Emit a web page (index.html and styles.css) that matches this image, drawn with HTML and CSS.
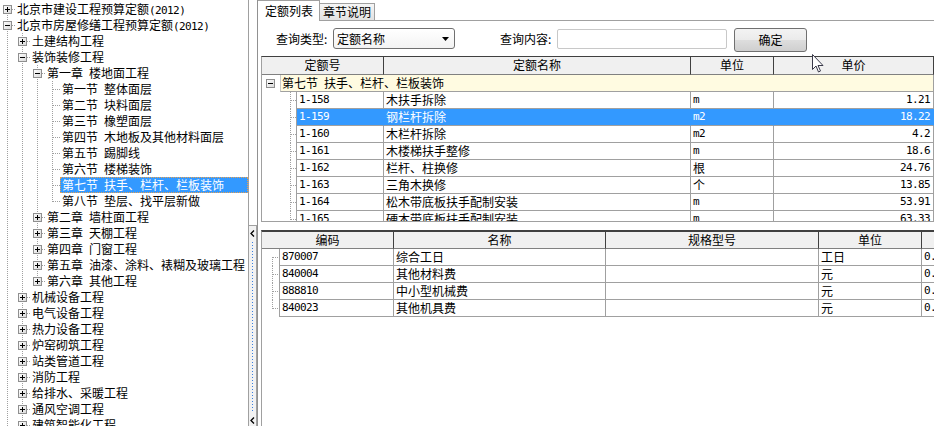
FILE: index.html
```html
<!DOCTYPE html>
<html lang="zh-CN">
<head>
<meta charset="utf-8">
<title>定额</title>
<link rel="stylesheet" href="styles.css">
</head>
<body>
<svg class="defs" width="0" height="0" aria-hidden="true">
  <defs>
    <linearGradient id="bxg" x1="0" y1="0" x2="1" y2="1">
      <stop offset="0" stop-color="#ffffff"/>
      <stop offset="1" stop-color="#d8d8d8"/>
    </linearGradient>
    <symbol id="plus" viewBox="0 0 9 9"><rect x=".5" y=".5" width="8" height="8" fill="url(#bxg)" stroke="#8f8f8f"/><path d="M2 4.5h5M4.5 2v5" stroke="#000"/></symbol>
    <symbol id="minus" viewBox="0 0 9 9"><rect x=".5" y=".5" width="8" height="8" fill="url(#bxg)" stroke="#8f8f8f"/><path d="M2 4.5h5" stroke="#000"/></symbol>
  </defs>
</svg>
<div class="app">
  <div class="tree">
    <div class="row"><span class="g s"><svg><use href="#plus"/></svg></span><span class="lb">北京市建设工程预算定额<span class="mn">(2012)</span></span></div>
    <div class="row"><span class="g t"><svg><use href="#minus"/></svg></span><span class="lb">北京市房屋修缮工程预算定额<span class="mn">(2012)</span></span></div>
    <div class="row"><span class="g v"></span><span class="g t"><svg><use href="#plus"/></svg></span><span class="lb">土建结构工程</span></div>
    <div class="row"><span class="g v"></span><span class="g t"><svg><use href="#minus"/></svg></span><span class="lb">装饰装修工程</span></div>
    <div class="row"><span class="g v"></span><span class="g v"></span><span class="g t"><svg><use href="#minus"/></svg></span><span class="lb">第一章&ensp;楼地面工程</span></div>
    <div class="row"><span class="g v"></span><span class="g v"></span><span class="g v"></span><span class="g t"></span><span class="lb">第一节&ensp;整体面层</span></div>
    <div class="row"><span class="g v"></span><span class="g v"></span><span class="g v"></span><span class="g t"></span><span class="lb">第二节&ensp;块料面层</span></div>
    <div class="row"><span class="g v"></span><span class="g v"></span><span class="g v"></span><span class="g t"></span><span class="lb">第三节&ensp;橡塑面层</span></div>
    <div class="row"><span class="g v"></span><span class="g v"></span><span class="g v"></span><span class="g t"></span><span class="lb">第四节&ensp;木地板及其他材料面层</span></div>
    <div class="row"><span class="g v"></span><span class="g v"></span><span class="g v"></span><span class="g t"></span><span class="lb">第五节&ensp;踢脚线</span></div>
    <div class="row"><span class="g v"></span><span class="g v"></span><span class="g v"></span><span class="g t"></span><span class="lb">第六节&ensp;楼梯装饰</span></div>
    <div class="row"><span class="g v"></span><span class="g v"></span><span class="g v"></span><span class="g t"></span><span class="lb sel">第七节&ensp;扶手、栏杆、栏板装饰</span></div>
    <div class="row"><span class="g v"></span><span class="g v"></span><span class="g v"></span><span class="g l"></span><span class="lb">第八节&ensp;垫层、找平层新做</span></div>
    <div class="row"><span class="g v"></span><span class="g v"></span><span class="g t"><svg><use href="#plus"/></svg></span><span class="lb">第二章&ensp;墙柱面工程</span></div>
    <div class="row"><span class="g v"></span><span class="g v"></span><span class="g t"><svg><use href="#plus"/></svg></span><span class="lb">第三章&ensp;天棚工程</span></div>
    <div class="row"><span class="g v"></span><span class="g v"></span><span class="g t"><svg><use href="#plus"/></svg></span><span class="lb">第四章&ensp;门窗工程</span></div>
    <div class="row"><span class="g v"></span><span class="g v"></span><span class="g t"><svg><use href="#plus"/></svg></span><span class="lb">第五章&ensp;油漆、涂料、裱糊及玻璃工程</span></div>
    <div class="row"><span class="g v"></span><span class="g v"></span><span class="g l"><svg><use href="#plus"/></svg></span><span class="lb">第六章&ensp;其他工程</span></div>
    <div class="row"><span class="g v"></span><span class="g t"><svg><use href="#plus"/></svg></span><span class="lb">机械设备工程</span></div>
    <div class="row"><span class="g v"></span><span class="g t"><svg><use href="#plus"/></svg></span><span class="lb">电气设备工程</span></div>
    <div class="row"><span class="g v"></span><span class="g t"><svg><use href="#plus"/></svg></span><span class="lb">热力设备工程</span></div>
    <div class="row"><span class="g v"></span><span class="g t"><svg><use href="#plus"/></svg></span><span class="lb">炉窑砌筑工程</span></div>
    <div class="row"><span class="g v"></span><span class="g t"><svg><use href="#plus"/></svg></span><span class="lb">站类管道工程</span></div>
    <div class="row"><span class="g v"></span><span class="g t"><svg><use href="#plus"/></svg></span><span class="lb">消防工程</span></div>
    <div class="row"><span class="g v"></span><span class="g t"><svg><use href="#plus"/></svg></span><span class="lb">给排水、采暖工程</span></div>
    <div class="row"><span class="g v"></span><span class="g t"><svg><use href="#plus"/></svg></span><span class="lb">通风空调工程</span></div>
    <div class="row"><span class="g v"></span><span class="g t"><svg><use href="#plus"/></svg></span><span class="lb">建筑智能化工程</span></div>
  </div>

  <div class="splitter">
    <div class="split-top"></div>
    <div class="split-btn">
      <svg class="chev" width="5" height="7" viewBox="0 0 5 7"><path d="M4 .5 1 3.5 4 6.5" fill="none" stroke="#000" stroke-width="1.3"/></svg>
      <div class="dots"></div>
      <svg class="chev" width="5" height="7" viewBox="0 0 5 7"><path d="M4 .5 1 3.5 4 6.5" fill="none" stroke="#000" stroke-width="1.3"/></svg>
    </div>
  </div>

  <div class="main">
    <div class="tabs">
      <div class="tab-on">定额列表</div>
      <div class="tab">章节说明</div>
      <div class="tab-fill"></div>
    </div>

    <div class="query">
      <span class="ql">查询类型:</span>
      <div class="sel-box"><span>定额名称</span><svg width="7" height="4" viewBox="0 0 7 4"><path d="M0 0h7L3.5 4z" fill="#000"/></svg></div>
      <span class="ql ql2">查询内容:</span>
      <div class="inp"></div>
      <div class="btn">确定</div>
    </div>

    <div class="grid1">
      <div class="tr th">
        <div class="u1">定额号</div><div class="u2">定额名称</div><div class="u3">单位</div><div class="u4">单价</div>
      </div>
      <div class="tr">
        <div class="gb"><svg width="9" height="9"><use href="#minus"/></svg></div>
        <div class="gc">第七节&ensp;扶手、栏杆、栏板装饰</div>
      </div>
      <div class="tr"><div class="ind ia"></div><div class="td u1d mn">1-158</div><div class="td u2">木扶手拆除</div><div class="td u3 mn">m</div><div class="td u4 r mn">1.21</div></div>
      <div class="tr sel"><div class="ind ia"></div><div class="td u1d mn">1-159</div><div class="td u2">钢栏杆拆除</div><div class="td u3 mn">m2</div><div class="td u4 r mn">18.22</div></div>
      <div class="tr"><div class="ind ia"></div><div class="td u1d mn">1-160</div><div class="td u2">木栏杆拆除</div><div class="td u3 mn">m2</div><div class="td u4 r mn">4.2</div></div>
      <div class="tr"><div class="ind ia"></div><div class="td u1d mn">1-161</div><div class="td u2">木楼梯扶手整修</div><div class="td u3 mn">m</div><div class="td u4 r mn">18.6</div></div>
      <div class="tr"><div class="ind ia"></div><div class="td u1d mn">1-162</div><div class="td u2">栏杆、柱换修</div><div class="td u3">根</div><div class="td u4 r mn">24.76</div></div>
      <div class="tr"><div class="ind ia"></div><div class="td u1d mn">1-163</div><div class="td u2">三角木换修</div><div class="td u3">个</div><div class="td u4 r mn">13.85</div></div>
      <div class="tr"><div class="ind ia"></div><div class="td u1d mn">1-164</div><div class="td u2">松木带底板扶手配制安装</div><div class="td u3 mn">m</div><div class="td u4 r mn">53.91</div></div>
      <div class="tr"><div class="ind ia"></div><div class="td u1d mn">1-165</div><div class="td u2">硬木带底板扶手配制安装</div><div class="td u3 mn">m</div><div class="td u4 r mn">63.33</div></div>
    </div>

    <div class="grid2">
      <div class="tr th th2">
        <div class="l1">编码</div><div class="l2">名称</div><div class="l3">规格型号</div><div class="l4">单位</div><div class="l5"></div>
      </div>
      <div class="tr"><div class="ind ib first"></div><div class="td l1d mn">870007</div><div class="td l2">综合工日</div><div class="td l3"></div><div class="td l4">工日</div><div class="td l5 mn">0.</div></div>
      <div class="tr"><div class="ind ib"></div><div class="td l1d mn">840004</div><div class="td l2">其他材料费</div><div class="td l3"></div><div class="td l4">元</div><div class="td l5 mn">0.</div></div>
      <div class="tr"><div class="ind ib"></div><div class="td l1d mn">888810</div><div class="td l2">中小型机械费</div><div class="td l3"></div><div class="td l4">元</div><div class="td l5 mn">0.</div></div>
      <div class="tr"><div class="ind ib last"></div><div class="td l1d mn">840023</div><div class="td l2">其他机具费</div><div class="td l3"></div><div class="td l4">元</div><div class="td l5 mn">0.</div></div>
    </div>
  </div>
</div>
<svg class="cursor" width="12" height="19" viewBox="0 0 12 19"><path d="M.5.5v15l3.5-3.5 2.5 6 2-1-2.5-5.5h5z" fill="#fff" stroke="#3a3a4a"/></svg>
</body>
</html>
```
FILE: styles.css
```css
* { box-sizing: border-box; }
html, body { margin: 0; padding: 0; }
body {
  width: 934px;
  height: 426px;
  overflow: hidden;
  background: #fff;
  color: #000;
  font-family: "Noto Sans CJK SC", "Noto Sans", sans-serif;
  font-size: 12px;
  --dv: repeating-linear-gradient(to bottom, #a0a0a0 0 1px, transparent 1px 2px);
  --dh: repeating-linear-gradient(to right, #a0a0a0 0 1px, transparent 1px 2px);
}
.defs { display: block; width: 0; height: 0; overflow: hidden; }
.mn { font-family: "DejaVu Sans Mono", "Liberation Mono", monospace; font-size: 11px; letter-spacing: -0.6px; }

.app { display: flex; height: 426px; }

/* tree */
.tree {
  width: 249px;
  flex: none;
  border-right: 1px solid #a0a0a0;
  padding-top: 1px;
  overflow: hidden;
}
.row { display: flex; height: 16px; }
.g { width: 15px; height: 16px; flex: none; padding: 4px 0 0 3px; }
.g svg { display: block; width: 9px; height: 9px; }
.g.v { background: var(--dv) 7px 0 / 1px 100% no-repeat; }
.g.t { background: var(--dh) 8px 8px / 7px 1px no-repeat, var(--dv) 7px 0 / 1px 100% no-repeat; }
.g.l { background: var(--dh) 8px 8px / 7px 1px no-repeat, var(--dv) 7px 0 / 1px 9px no-repeat; }
.g.s { background: var(--dh) 8px 8px / 7px 1px no-repeat, var(--dv) 7px 8px / 1px 8px no-repeat; }
.lb {
  flex: 1;
  padding-left: 2px;
  line-height: 16px;
  white-space: nowrap;
  overflow: hidden;
}
.lb.sel {
  background: #3399ff;
  color: #fff;
  outline: 1px dotted #e8a050;
  outline-offset: -1px;
}

/* splitter */
.splitter { width: 8px; flex: none; display: flex; flex-direction: column; }
.split-top { height: 225px; flex: none; }
.split-btn {
  flex: 1;
  background: #f2f2f2;
  border-top: 1px solid #a0a0a0;
  border-right: 1px solid #a0a0a0;
  display: flex;
  flex-direction: column;
  align-items: center;
  padding: 4px 0 2px;
}
.chev { display: block; flex: none; }
.dots {
  flex: 1;
  width: 1px;
  margin: 5px 0 5px;
  background: repeating-linear-gradient(to bottom, #3a80e0 0 1px, transparent 1px 3px);
}

/* main */
.main {
  flex: 1;
  min-width: 0;
  border-left: 1px solid #919191;
  display: flex;
  flex-direction: column;
  overflow: hidden;
}
.tabs { display: flex; height: 21px; flex: none; }
.tab-on {
  height: 21px;
  padding: 0 6px 0 7px;
  border-top: 1px solid #a0a0a0;
  border-right: 1px solid #a0a0a0;
  line-height: 19px;
  background: #fff;
}
.tab {
  height: 18px;
  margin-top: 3px;
  padding: 0 3px;
  border-top: 1px solid #a0a0a0;
  border-right: 1px solid #a0a0a0;
  border-bottom: 1px solid #a0a0a0;
  background: linear-gradient(#f6f6f6, #e2e2e2);
  line-height: 16px;
}
.tab-fill { flex: 1; border-bottom: 1px solid #a0a0a0; }

.query {
  display: flex;
  align-items: flex-start;
  height: 35px;
  flex: none;
  padding: 7px 0 0 18px;
}
.ql { width: 57px; flex: none; line-height: 21px; white-space: nowrap; }
.ql2 { margin-left: 45px; }
.sel-box {
  width: 122px;
  height: 21px;
  flex: none;
  border: 1px solid #707070;
  border-radius: 3px;
  background: linear-gradient(#ffffff, #f3f3f3);
  display: flex;
  align-items: center;
  padding: 0 5px 0 3px;
}
.sel-box span { flex: 1; line-height: 19px; }
.sel-box svg { display: block; }
.inp {
  width: 170px;
  height: 20px;
  flex: none;
  margin-top: 1px;
  border: 1px solid #c8c8c8;
  border-radius: 2px;
  background: #fff;
}
.btn {
  width: 73px;
  height: 24px;
  flex: none;
  margin-left: 7px;
  border: 1px solid #707070;
  border-radius: 3px;
  background: linear-gradient(#f3f3f3 0, #ebebeb 48%, #dddddd 52%, #cfcfcf 100%);
  text-align: center;
  line-height: 22px;
}

/* grids */
.grid1 {
  height: 166px;
  flex: none;
  margin-left: 3px;
  border-left: 1px solid #a0a0a0;
  border-top: 1px solid #404040;
  border-bottom: 1px solid #a0a0a0;
  overflow: hidden;
}
.grid2 {
  flex: 1;
  margin: 8px 0 0 3px;
  border-left: 1px solid #a0a0a0;
  border-top: 2px solid #404040;
  overflow: hidden;
}
.tr { display: flex; height: 17px; white-space: nowrap; }
.th { height: 18px; }
.th2 { height: 17px; }
.th > div {
  flex: none;
  background: #f0f0f0;
  border-right: 1px solid #404040;
  border-bottom: 1px solid #808080;
  text-align: center;
  line-height: 16px;
}
.td {
  flex: none;
  height: 17px;
  border-right: 1px solid #a0a0a0;
  border-bottom: 1px solid #a0a0a0;
  line-height: 16px;
  padding-left: 2px;
  overflow: hidden;
}
.td.r { text-align: right; padding: 0 3px 0 0; }
.tr.sel .td { background: #3399ff; color: #fff; border-right-color: #3399ff; }

.u1 { width: 122px; }
.u2 { width: 307px; }
.u3 { width: 83px; }
.u4 { width: 160px; }
.u1d { width: 88px; border-left: 1px solid #a0a0a0; }

.gb { width: 18px; flex: none; padding: 4px 0 0 4px; }
.gb svg { display: block; }
.gc {
  width: 654px;
  flex: none;
  background: #fffbe1;
  border-left: 1px solid #c8c8c8;
  border-right: 1px solid #a0a0a0;
  border-bottom: 1px solid #a0a0a0;
  line-height: 16px;
  padding-left: 1px;
}

.ind { flex: none; height: 17px; }
.ia {
  width: 34px;
  background: var(--dh) 29px 8px / 5px 1px no-repeat, var(--dv) 28px 0 / 1px 100% no-repeat;
}
.ib {
  width: 17px;
  background: var(--dh) 11px 8px / 6px 1px no-repeat, var(--dv) 10px 0 / 1px 100% no-repeat;
}
.ib.first { background: var(--dh) 11px 8px / 6px 1px no-repeat, var(--dv) 10px 8px / 1px 9px no-repeat; }
.ib.last { background: var(--dh) 11px 8px / 6px 1px no-repeat, var(--dv) 10px 0 / 1px 9px no-repeat; }

.l1 { width: 132px; }
.l2 { width: 212px; }
.l3 { width: 213px; }
.l4 { width: 103px; }
.l5 { width: 80px; }
.l1d { width: 115px; border-left: 1px solid #a0a0a0; }

.cursor { position: absolute; left: 812px; top: 54px; display: block; }
```
